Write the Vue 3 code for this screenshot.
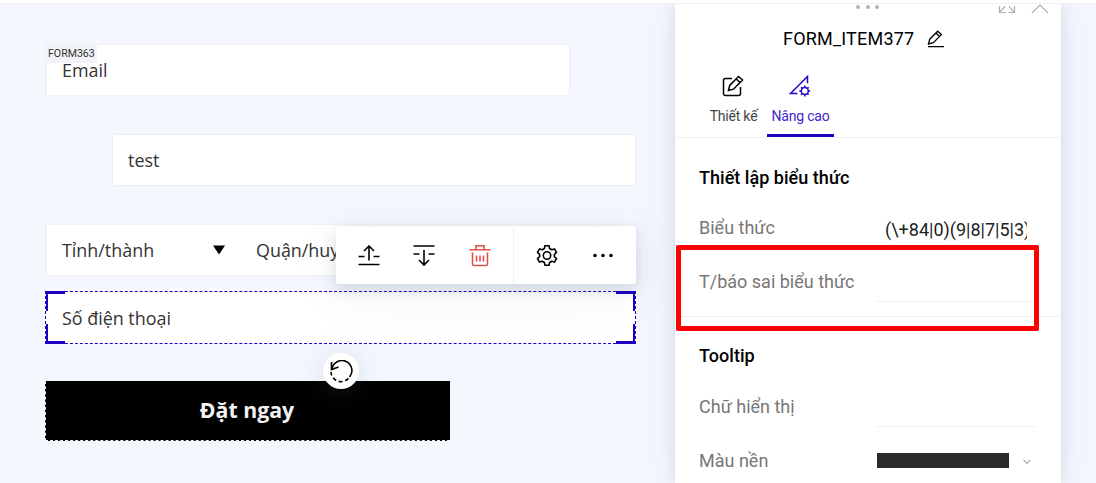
<script setup>
const sections = [
  { title: 'Thiết lập biểu thức', rows: [
    { label: 'Biểu thức', value: '(\\+84|0)(9|8|7|5|3)', kind: 'filled' },
    { label: 'T/báo sai biểu thức', value: '', kind: 'line' },
  ] },
  { title: 'Tooltip', rows: [
    { label: 'Chữ hiển thị', value: '', kind: 'line' },
    { label: 'Màu nền', value: '', kind: 'color' },
  ] },
]
const corners = ['tl', 'tr', 'bl', 'br']
</script>

<template>
  <div class="page">
    <div class="topbar"></div>
    <main class="workspace">
      <section class="form">
        <span class="form-tag">FORM363</span>
        <div class="field email">Email</div>
        <div class="field test">test</div>
        <div class="field selects">
          <span class="province">Tỉnh/thành</span>
          <svg class="caret" width="12" height="10" viewBox="0 0 12 10"><path d="M0 .5h12L6 9.500z" /></svg>
          <span>Quận/huyện</span>
        </div>
        <div class="field phone">
          Số điện thoại
          <i v-for="c in corners" :key="c" class="corner" :class="c"></i>
        </div>
        <div class="submit">Đặt ngay</div>

        <div class="toolbar">
          <div class="tools main-tools">
            <svg width="22" height="22" viewBox="0 0 22 22"><path d="M11 15.500V1M6 6l5-5 5 5M.5 11.500h6M15.500 11.500h6M.5 19.500h21" /></svg>
            <svg width="22" height="22" viewBox="0 0 22 22"><path d="M11 5v14.500M6 15l5 5 5-5M.5 9h6M15.500 9h6M.5 1h21" /></svg>
            <svg class="danger" width="22" height="22" viewBox="0 0 22 22"><path d="M.5 4.800h21M7 4.500V.8h8v3.700M3.500 7.500v11.500q0 1.500 1.500 1.500h12q1.500 0 1.500-1.500V7.500M7.500 10.500v6M11 10.500v6M14.500 10.500v6" /></svg>
          </div>
          <div class="tools more-tools">
            <svg width="22" height="22" viewBox="0 0 22 22"><circle cx="11" cy="10.500" r="3.700" /><path stroke-linejoin="round" d="M9 .7h4l.6 2.800 2.200 1.300 2.700-.9 2 3.500-2.100 1.900v2.400l2.100 1.900-2 3.500-2.700-.9-2.200 1.300-.6 2.800H9l-.6-2.800-2.200-1.300-2.700.9-2-3.500 2.100-1.900V9.300L1.500 7.400l2-3.500 2.700.9 2.200-1.300z" /></svg>
            <svg width="22" height="22" viewBox="0 0 22 22"><g class="dot"><circle cx="3" cy="10.500" r="1.800" /><circle cx="11" cy="10.500" r="1.800" /><circle cx="19" cy="10.500" r="1.800" /></g></svg>
          </div>
        </div>

        <div class="rotate">
          <svg width="24" height="24" viewBox="0 0 24 24"><path d="M3 9A10 10 0 1 1 20.500 17" /><path stroke-dasharray="4 2.600" d="M19.400 18.400A10 10 0 0 1 2 12" /><path d="M2.500 2v7.500L9.500 7" /></svg>
        </div>
      </section>

      <aside class="panel">
        <div class="grip"><i></i><i></i><i></i></div>
        <svg class="window-icons" width="50" height="10" viewBox="0 0 50 10"><path d="M1.500 2v6.500H8M1.500 8.500l5.500-6M10.500 8.500h6V2M16.500 8.500l-5.500-6M34 9l8-8 8 8" /></svg>
        <header class="title">
          <span>FORM_ITEM377</span>
          <svg width="18" height="18" viewBox="0 0 18 18"><path d="M1.500 14l1.200-4.800 8-8 3.700 3.400-8 8.100zM9 3l3.600 3.500M1 16.600h16" /></svg>
        </header>
        <nav class="tabs">
          <div class="tab">
            <svg width="22" height="22" viewBox="0 0 22 22"><path d="M10 3.500H3.500q-2 0-2 2v13q0 2 2 2h13q2 0 2-2V12M6.500 15.500l1.200-5 8.800-9L20.500 5l-9 9.200zM14.300 4l3.600 3.500" /></svg>
            <span>Thiết kế</span>
          </div>
          <div class="tab active">
            <svg width="22" height="22" viewBox="0 0 22 22"><path d="M8.500 18.500h-7L18.500 1.500v6.800" /><circle cx="15.800" cy="16" r="3.500" /><path d="M15.800 10.600v2M15.800 19.500v2M10.400 16h2M19.200 16h2M12 12.200l1.400 1.400M18.200 18.400l1.400 1.400M12 19.800l1.400-1.400M18.200 13.600l1.400-1.400" /></svg>
            <span>Nâng cao</span>
          </div>
        </nav>
        <section v-for="s in sections" :key="s.title" class="settings">
          <h3>{{ s.title }}</h3>
          <div v-for="r in s.rows" :key="r.label" class="row">
            <label>{{ r.label }}</label>
            <div class="control" :class="r.kind">
              <span v-if="r.kind !== 'color'" class="value">{{ r.value }}</span>
              <template v-else>
                <span class="swatch"></span>
                <svg width="8" height="6" viewBox="0 0 8 6"><path d="M.5 1L4 4.500 7.500 1" /></svg>
              </template>
            </div>
          </div>
        </section>
        <div class="highlight"></div>
      </aside>
    </main>
  </div>
</template>

<style>
body { margin: 0; overflow: hidden; }
</style>

<style scoped>
* { box-sizing: border-box; }
.page { width: 1096px; height: 483px; overflow: hidden; display: flex; flex-direction: column; background: #f4f7fe; font-family: Roboto, "Noto Sans", sans-serif; }
.topbar { height: 4px; flex: none; background: #fff; border-bottom: 1px solid #efefef; }
.workspace { height: 479px; display: flex; align-items: flex-start; overflow: hidden; }
svg { display: block; flex: none; fill: none; stroke: #000; stroke-width: 1.6; }

.form { position: relative; width: 591px; height: 397px; margin: 40px 39px 0 45px; flex: none; border: 1px dashed #eff1f4; display: flex; flex-direction: column; font-family: "Open Sans", "Noto Sans", sans-serif; }
.form-tag { position: absolute; z-index: 1; left: 0; top: 0; width: 51px; height: 18px; padding-left: 2px; background: #f1f3f6; color: #333; font: 400 10.6px/17px Roboto, sans-serif; }
.field { width: 524px; height: 52px; flex: none; padding-left: 15px; background: #fff; border: 1px solid #f0f1f4; color: #333; font-size: 17.9px; font-weight: 400; line-height: 50px; white-space: nowrap; }
.email { margin-top: -1px; }
.test { margin: 38px 0 0 66px; }
.selects { width: 590px; margin-top: 38px; display: flex; align-items: center; }
.province { width: 151px; }
.caret { margin-right: 31px; fill: #000; stroke: none; }
.phone { position: relative; width: 591px; height: 53px; margin: 15px 0 0 -1px; padding-left: 16px; border: 1px dashed #1d00c0; line-height: 53px; }
.corner { position: absolute; width: 19px; height: 20px; border: 0 solid #1d00c0; }
.tl { left: 0; top: -1px; border-width: 3px 0 0 2px; }
.tr { right: 0; top: -1px; border-width: 3px 2px 0 0; }
.bl { left: 0; bottom: -1px; border-width: 0 0 3px 2px; }
.br { right: 0; bottom: -1px; border-width: 0 2px 3px 0; }
.submit { width: 405px; height: 60px; flex: none; margin: 37px 0 0 -1px; background: #000; border: 1px dashed #eff1f4; border-width: 0 0 1px 1px; color: #f2f2f2; font-size: 21.3px; font-weight: 700; line-height: 57px; padding-right: 2px; text-align: center; }
.toolbar { position: absolute; left: 290px; top: 182px; width: 300px; height: 57px; display: flex; background: #fff; border-radius: 3px; box-shadow: 0 5px 15px rgba(50, 60, 80, .16), 0 8px 60px rgba(50, 60, 80, .06); }
.tools { display: flex; align-items: center; }
.main-tools { width: 178px; padding-left: 22px; gap: 33px; border-right: 1px solid #eeeff1; }
.main-tools .danger { margin-left: 1px; }
.more-tools { padding-left: 22px; gap: 34px; }
.danger { stroke: #df5149; }
.dot { fill: #000; stroke: none; }
.rotate { position: absolute; left: 277px; top: 308px; width: 36px; height: 36px; display: grid; place-items: center; border-radius: 50%; background: #fff; box-shadow: 0 2px 28px rgba(80, 115, 145, .2); }
.rotate svg { margin-top: 1px; }

.panel { position: relative; width: 386px; height: 479px; flex: none; background: #fff; box-shadow: 0 0 14px rgba(40, 50, 80, .14), 0 0 50px rgba(60, 80, 160, .06); }
.grip { position: absolute; left: 181px; top: 1px; display: flex; gap: 5.500px; }
.grip i { width: 4px; height: 4px; border-radius: 50%; background: #b3b3b3; }
.window-icons { position: absolute; left: 323px; top: 0; stroke: #b1b1b1; stroke-width: 1.2; }
.title { height: 67px; padding: 24px 0 0 108px; display: flex; gap: 13px; color: #000; font-size: 18px; letter-spacing: .2px; line-height: 22px; }
.title svg { margin-top: 2px; stroke-width: 1.3; }
.tabs { height: 67px; padding-left: 25px; display: flex; border-bottom: 1px solid #f0f0f0; }
.tab { width: 67px; height: 66px; padding-top: 4px; display: flex; flex-direction: column; align-items: center; gap: 10px; color: #444; font-size: 14px; letter-spacing: -.2px; line-height: 18px; }
.tab svg { margin-left: -2px; stroke-width: 1.5; }
.tab.active { color: #4324d0; border-bottom: 3px solid #1d00c0; }
.active svg { stroke: #2805c8; }
.settings { height: 179px; padding: 28px 24px 0; border-bottom: 1px solid #f0f0f0; }
.settings + .settings { padding-top: 27px; }
.settings + .settings h3 { margin-bottom: 13px; }
h3 { margin: 0 0 12px; color: #000; font-size: 18px; font-weight: 500; letter-spacing: .03px; line-height: 24px; }
.row { height: 54px; display: flex; align-items: flex-start; }
.row label { width: 178px; flex: none; padding-top: 13px; color: #777; font-size: 18px; line-height: 26px; }
.control { width: 158px; height: 46px; flex: none; }
.value { display: block; width: 150px; padding-left: 8px; overflow: hidden; white-space: nowrap; color: #222; font-size: 18px; line-height: 26px; padding-top: 15px; }
.line { border-bottom: 1px solid #eee; }
.color { display: flex; align-items: center; gap: 14px; padding-top: 5px; }
.swatch { width: 132px; height: 15px; background: #2a2a2a; }
.color svg { stroke: #777; stroke-width: 1; margin-top: 2px; }
.highlight { position: absolute; left: 1px; top: 241px; width: 363px; height: 86px; border: 5px solid #f00; border-radius: 2px; }
</style>
